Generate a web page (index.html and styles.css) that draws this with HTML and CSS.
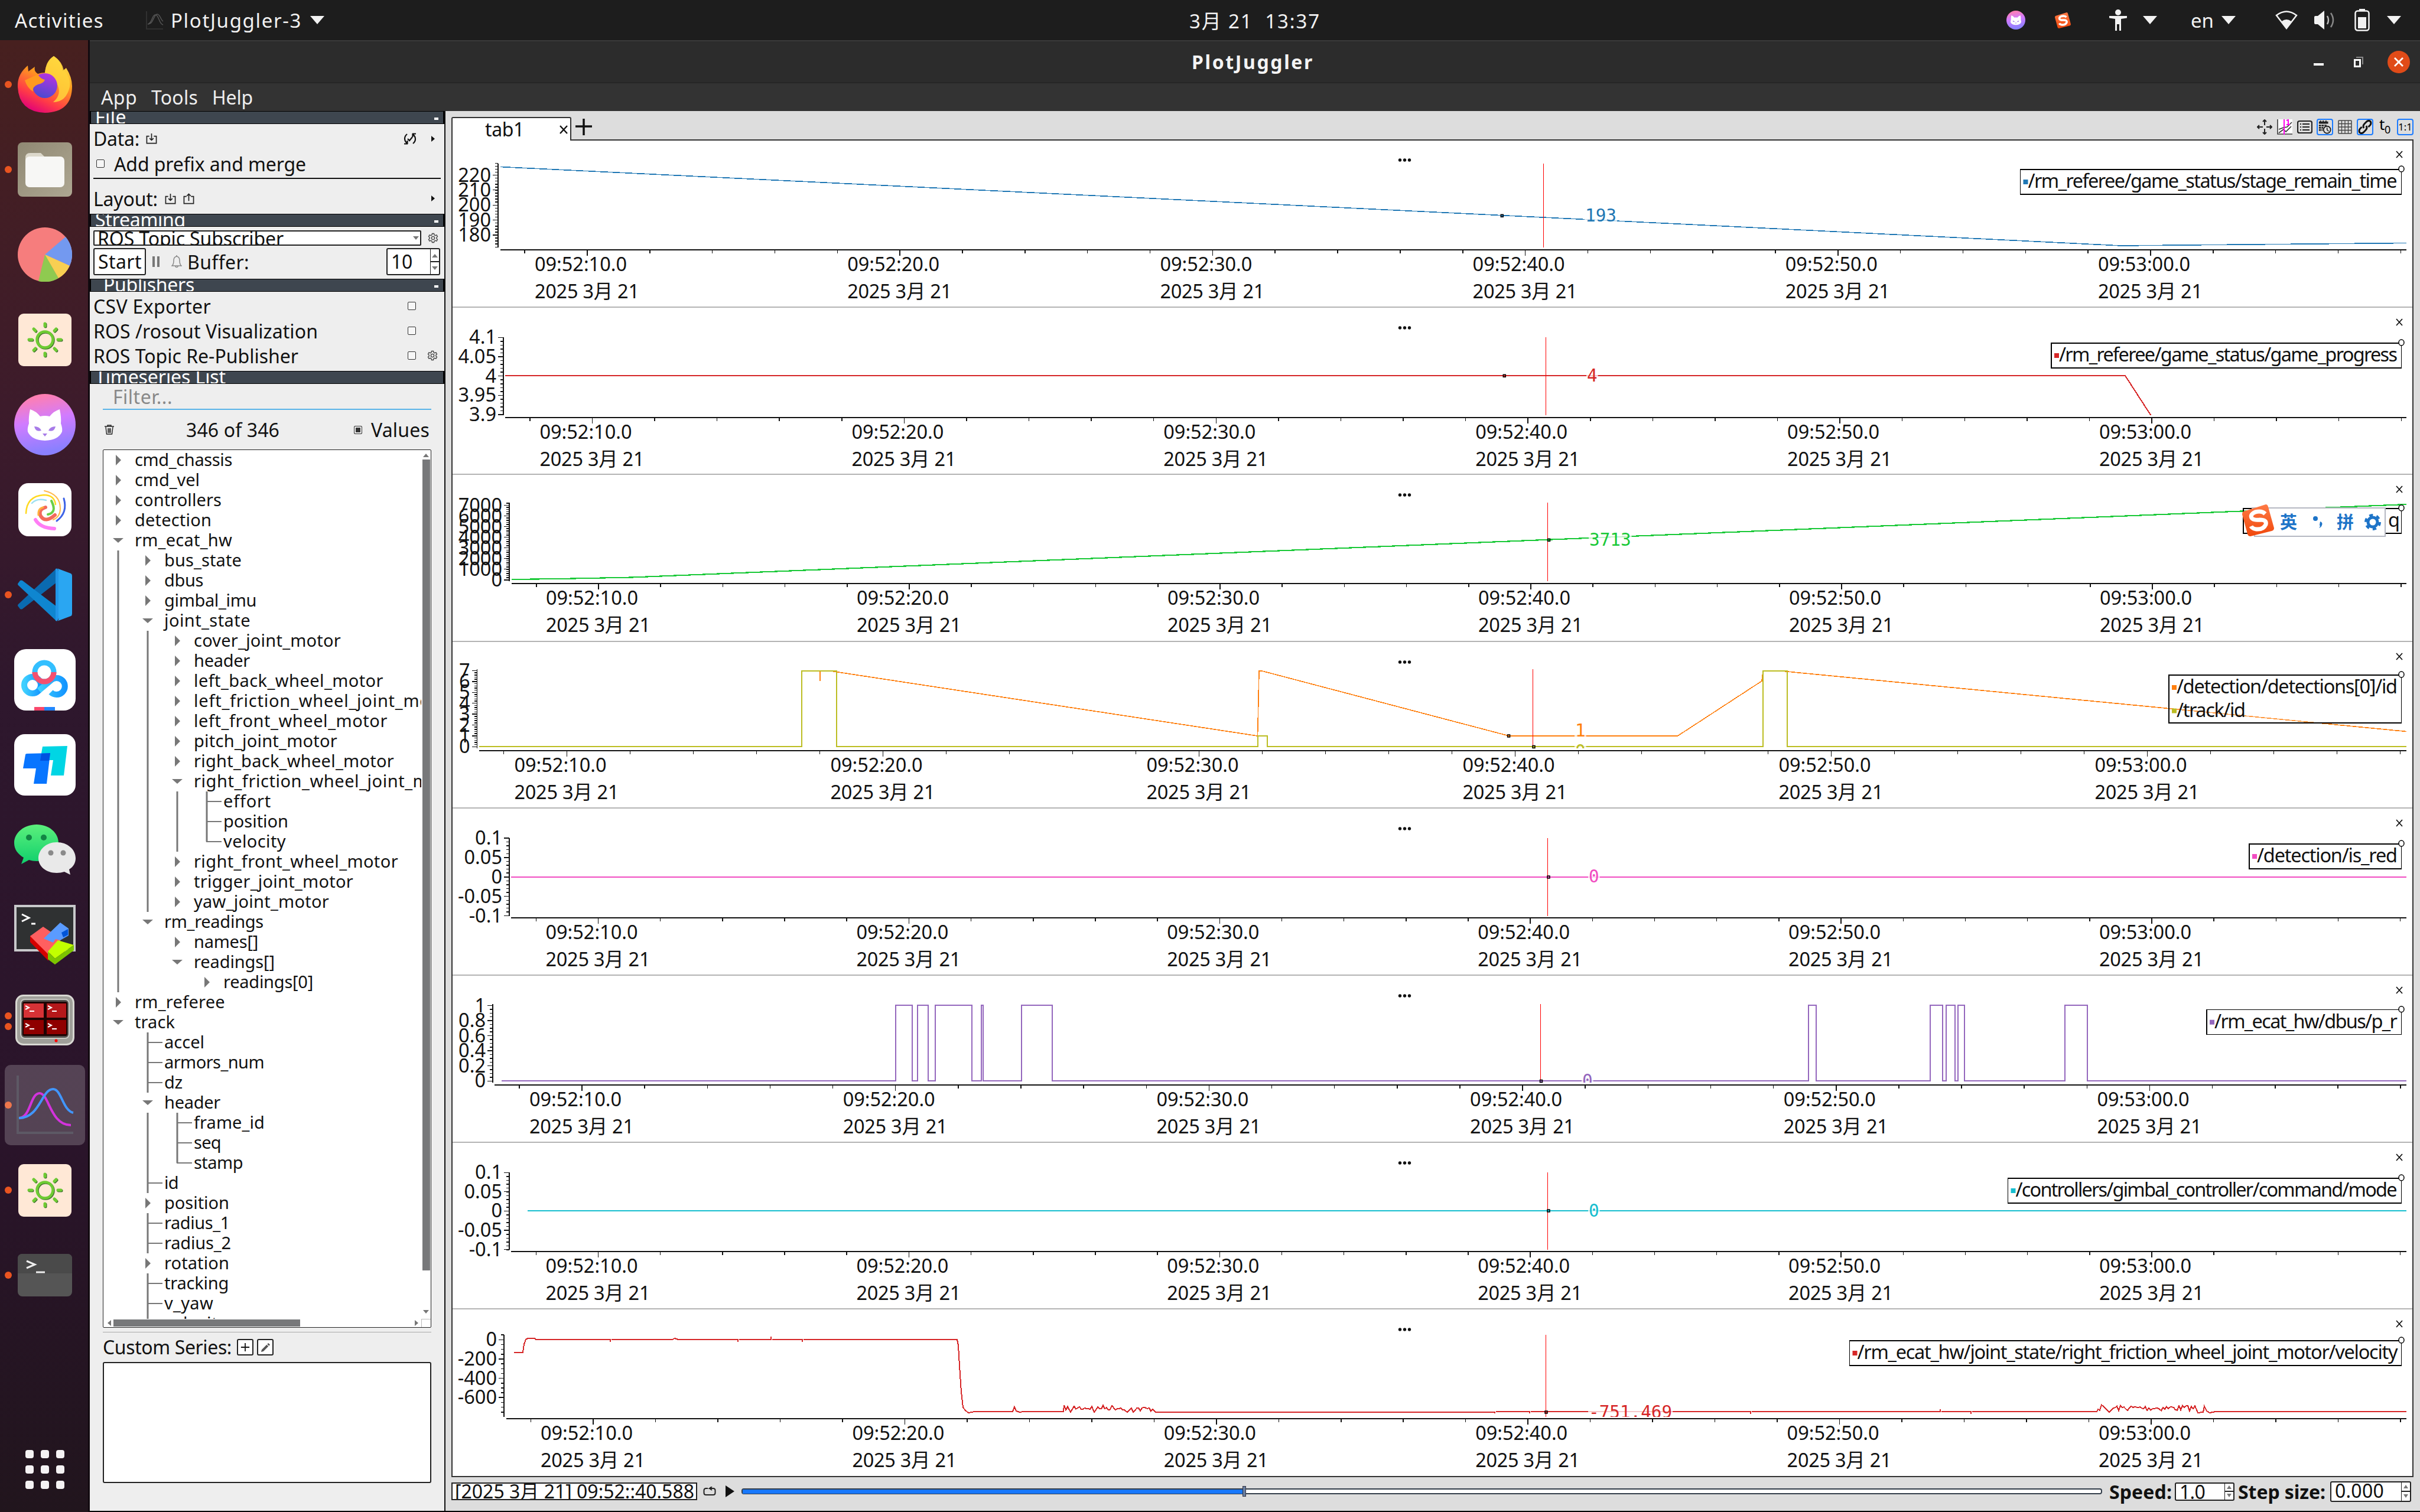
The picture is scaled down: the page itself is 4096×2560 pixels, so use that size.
FILE: index.html
```html
<!DOCTYPE html>
<html lang="en">
<head>
<meta charset="utf-8">
<title>PlotJuggler</title>
<link rel="stylesheet" href="styles.css">
</head>
<body>
<svg class="defs" width="0" height="0">
  <defs>
    <linearGradient id="catg" x1="0" y1="0" x2="0.2" y2="1"><stop offset="0.1" stop-color="#ff7fb0"/><stop offset="0.5" stop-color="#d17bff"/><stop offset="1" stop-color="#8a80ff"/></linearGradient>
    <linearGradient id="ffg" x1="0.8" y1="0" x2="0.3" y2="1"><stop offset="0" stop-color="#fff44f"/><stop offset="0.4" stop-color="#ff9a1f"/><stop offset="0.75" stop-color="#ff3b47"/><stop offset="1" stop-color="#e0007a"/></linearGradient>
    <linearGradient id="ffp" x1="0.7" y1="0" x2="0.4" y2="1"><stop offset="0" stop-color="#b833e1"/><stop offset="1" stop-color="#4a4ad0"/></linearGradient>
    <linearGradient id="fold" x1="0" y1="0" x2="1" y2="1"><stop offset="0" stop-color="#8f8873"/><stop offset="1" stop-color="#aea792"/></linearGradient>
    <linearGradient id="wxg" x1="0" y1="0" x2="0" y2="1"><stop offset="0" stop-color="#5cf07c"/><stop offset="1" stop-color="#0fcf6c"/></linearGradient>
    <linearGradient id="bdg" x1="0" y1="0" x2="1" y2="0"><stop offset="0" stop-color="#3fd0ff"/><stop offset="1" stop-color="#1496ff"/></linearGradient>
    <linearGradient id="sgg" x1="0" y1="0" x2="0" y2="1"><stop offset="0" stop-color="#ff7a45"/><stop offset="1" stop-color="#f0480c"/></linearGradient>
    <symbol id="cat" viewBox="0 0 104 104"><ellipse cx="52" cy="52" rx="52" ry="52" fill="url(#catg)"/><path d="M27 26q-3 14-2 24-3 8-2 14 6 14 29 15 23-1 29-15 1-6-2-14 1-10-2-24-10 3-17 12-8-2-16 0-7-9-17-12z" fill="#fff"/><path d="M34 55q9 0 12 7-10 3-12-7zM70 55q-9 0-12 7 10 3 12-7zM48 67h8l-4 5z" fill="#a77be8"/></symbol>
    <symbol id="sogou" viewBox="0 0 56 54"><path d="M2 12 40 0q3 0 4 4l10 36q0 4-4 5L14 54q-4 0-5-4L0 17q0-4 2-5z" fill="url(#sgg)"/><path d="M39 16q-6-6-17-3-9 4-6 10 3 4 14 3 12 0 10 8-4 9-16 8-7-1-9-5" fill="none" stroke="#fff" stroke-width="7"/></symbol>
    <symbol id="gear" viewBox="0 0 24 24"><path d="M10 2h4l.7 3 2.3 1.2 3-1 2 3.500-2.200 2.100v2.400l2.200 2.100-2 3.500-3-1-2.300 1.200-.7 3h-4l-.7-3L7 17.800l-3 1-2-3.500 2.200-2.100v-2.400L2 8.700l2-3.500 3 1L9.300 5z"/><circle cx="12" cy="12" r="3.500"/></symbol>
    <symbol id="tray-in" viewBox="0 0 20 20"><path d="M6 6H1.500v12.500h17V6H14M10 1v12M6.500 9.500 10 13l3.500-3.500" fill="none" stroke="#222" stroke-width="1.800"/></symbol>
    <symbol id="tray-out" viewBox="0 0 20 20"><path d="M6 6H1.500v12.500h17V6H14M10 14V1.500M6.500 5 10 1.500 13.500 5" fill="none" stroke="#222" stroke-width="1.800"/></symbol>
    <symbol id="sun" viewBox="0 0 92 92"><rect x="1" y="2" width="90" height="89" rx="9" fill="#ffe8d6"/><g fill="none" stroke="#3b6b2c" stroke-linecap="round" transform="translate(1 1)"><circle cx="46" cy="46" r="13.500" stroke-width="4.500"/><path stroke-width="5" d="M46 19v4M46 69v4M19 46h5M68 46h5M27 28l3 3M62 61l3 3M27 64l3-3M62 31l3-3"/></g><g fill="none" stroke="#6ecb33" stroke-linecap="round"><circle cx="46" cy="46" r="13.500" stroke-width="4.500"/><path stroke-width="5" d="M46 19v4M46 69v4M19 46h5M68 46h5M27 28l3 3M62 61l3 3M27 64l3-3M62 31l3-3"/></g></symbol>
  </defs>
</svg>

<header class="topbar">
  <span class="t activities" data-w="151">Activities</span>
  <svg class="app-ico" width="32" height="34" viewBox="0 0 32 34"><path d="M2 2v30h28" fill="none" stroke="#303030" stroke-width="2"/><path d="M4 24C12 22 11 8 17 8s6 16 13 17M4 24c10 0 10-17 16-17 5 0 6 10 10 12" fill="none" stroke="#555" stroke-width="1.500"/></svg>
  <span class="t appname" data-w="222">PlotJuggler-3</span>
  <i class="caret"></i>
  <span class="t clock" data-w="222">3月 21&nbsp; 13:37</span>
  <div class="tray">
    <svg class="i-cat" width="32" height="32"><use href="#cat"/></svg>
    <svg class="i-sg" width="28" height="27"><use href="#sogou"/></svg>
    <svg class="i-acc" width="30" height="36" viewBox="0 0 30 36"><circle cx="15" cy="5" r="5" fill="#f2f2f2"/><path d="M0 11h30v3.500l-10 1.500v20h-3V25h-4v11h-3V16L0 14.500z" fill="#f2f2f2"/></svg>
    <i class="caret c1"></i>
    <span class="t en" data-w="39">en</span>
    <i class="caret c2"></i>
    <svg class="i-wifi" width="38" height="32" viewBox="0 0 38 32"><path d="M2 8Q19-5 36 8L19 30z" fill="none" stroke="#f2f2f2" stroke-width="2.500"/><path d="M11 18q8-6 16 0l-8 13z" fill="#f2f2f2"/></svg>
    <svg class="i-vol" width="38" height="34" viewBox="0 0 38 34"><path d="M1 12q0-2 2-2h4l11-9v32L7 24H3q-2 0-2-2z" fill="#f2f2f2"/><path d="M23 10q4 7 0 14" stroke="#bbb" fill="none" stroke-width="2.500"/><path d="M29 5q8 12 0 24" stroke="#888" fill="none" stroke-width="2.500"/></svg>
    <svg class="i-bat" width="26" height="38" viewBox="0 0 26 38"><path d="M8 0h10v4H8z" fill="#f2f2f2"/><rect x="1.500" y="3.500" width="23" height="33" rx="4" fill="none" stroke="#f2f2f2" stroke-width="2.500"/><rect x="6" y="14" width="14" height="19" fill="#f2f2f2"/></svg>
    <i class="caret c3"></i>
  </div>
</header>

<div class="desk">
<nav class="dock">
  <div class="app run"><svg width="92" height="96" viewBox="0 0 92 96"><path d="M61 0q14 9 15 25l6-5q10 16 10 31 0 44-46 45Q2 94 0 52-1 31 17 16l1 10 11-8q-2 8 5 12 6-2 12-2 2-19 15-28z" fill="url(#ffg)"/><path d="M61 0q14 9 17 24 12 12 10 28-6 26-28 26 16-14 6-32-10-8-20-16 1-22 15-30z" fill="#ffd43c" opacity=".85"/><circle cx="46" cy="50" r="21" fill="url(#ffp)"/><path d="M12 41q15-7 22-10 5 8 12 9-2 6-12 8-10 4-8 12-10-6-14-19z" fill="#ff9a1f"/></svg></div>
  <div class="app run"><svg width="92" height="92" viewBox="0 0 92 92"><rect width="92" height="92" rx="8" fill="url(#fold)"/><path d="M13 26q0-8 8-8h18l8 8v20H13z" fill="#dcd8cb"/><rect x="13" y="24" width="66" height="52" rx="7" fill="#f7f7f5"/></svg></div>
  <div class="app"><svg width="92" height="92" viewBox="0 0 92 92"><circle cx="46" cy="46" r="46" fill="#f67d7d"/><path d="M46 46 81 16A46 46 0 0 1 88 65z" fill="#7399f0"/><path d="M46 46 88 65A46 46 0 0 1 69 86z" fill="#f8cf52"/><path d="M46 46 69 86A46 46 0 0 1 35 91z" fill="#8fca50"/></svg></div>
  <div class="app"><svg width="92" height="92"><use href="#sun"/></svg></div>
  <div class="app"><svg width="104" height="104"><use href="#cat"/></svg></div>
  <div class="app"><svg width="90" height="90" viewBox="0 0 90 90"><rect width="90" height="90" rx="17" fill="#fff"/><g fill="none" stroke-linecap="round"><path d="M13 51Q14 22 43 20q18 0 20 16" stroke="#ffd91f" stroke-width="2.500"/><path d="M44 13q27 6 27 30 0 14-12 19" stroke="#ffb94d" stroke-width="2"/><path d="M77 26q7 24-12 38" stroke="#3e63e6" stroke-width="3"/><path d="M23 34q8-9 24-5" stroke="#9fe0f0" stroke-width="2.500"/><path d="M56 30q10 20-6 23" stroke="#69cf48" stroke-width="4"/><path d="M62 54Q46 68 38 56q-5-11 8-15" stroke="#f36a5c" stroke-width="6"/><path d="M34 54q-1-11 8-13" stroke="#ffb03c" stroke-width="3"/><path d="M29 62q8 14 32 15" stroke="#ff7df5" stroke-width="6"/></g></svg></div>
  <div class="app run"><svg width="92" height="92" viewBox="0 0 92 92"><path d="M66 1v24L8 70q-2 1-4 0l-3-4q-2-2 0-4z" fill="#0a6ab0"/><path d="M66 91V66L8 22q-2-1-4 0l-3 4q-2 2 0 4z" fill="#0f86d0"/><path d="M66 1 90 10q2 1 2 4v64q0 3-2 4L66 91q4-1 3-6V7q0-5-3-6z" fill="#2aa6f2"/><path d="M64 2q4-1 5 4v80q-1 5-5 4z" fill="#2196e8"/></svg></div>
  <div class="app"><svg width="104" height="104" viewBox="0 0 104 104"><rect width="104" height="104" rx="20" fill="#fff"/><g fill="none" stroke="url(#bdg)" stroke-width="10"><circle cx="31" cy="61" r="14"/><path d="M42 70 62 53a14 14 0 1 1 0 20"/></g><circle cx="51" cy="39" r="16" stroke="#33bfff" fill="none" stroke-width="9"/><path d="M35 39a16 16 0 0 0 32 0" stroke="#f4506f" fill="none" stroke-width="9"/><path d="M34 98h17v6H34z" fill="#f9476b"/><path d="M51 98h18v6H51z" fill="#2287ff"/></svg></div>
  <div class="app"><svg width="104" height="104" viewBox="0 0 104 104"><rect width="104" height="104" rx="18" fill="#fff"/><path d="M48 21 90 20 84 70H62l4-26H44z" fill="#00d5e4"/><path d="M19 35q0-2 3-2l39-1-6 52H33l4-26H15z" fill="#0875ff"/><path d="M46 33l15-1-2 13H44z" fill="#0052e0"/></svg></div>
  <div class="app"><svg width="104" height="86" viewBox="0 0 104 86"><path d="M38 0c21 0 37 14 37 31S59 62 38 62q-7 0-13-2l-13 7 4-11C6 50 0 42 0 31 0 14 17 0 38 0z" fill="url(#wxg)"/><circle cx="25" cy="22" r="5" fill="#128544"/><circle cx="50" cy="22" r="5" fill="#128544"/><path d="M72 30c18 0 32 12 32 27 0 8-4 15-11 19l2 9-10-5q-6 2-13 2c-18 0-31-11-31-25s13-27 31-27z" fill="#e9e9e9"/><circle cx="62" cy="48" r="4.500" fill="#8a8a8a"/><circle cx="83" cy="48" r="4.500" fill="#8a8a8a"/></svg></div>
  <div class="app"><svg width="104" height="102" viewBox="0 0 104 102"><rect x="2" y="2" width="100" height="75" fill="#2f3132" stroke="#c8c9cb" stroke-width="4"/><path d="M13 16l12 6-12 6M29 32h7" fill="none" stroke="#fff" stroke-width="3"/><path d="M27 52 58 69v26L27 63z" fill="#d40000"/><path d="M27 53 49 37 80 58 58 84z" fill="#ff5f60"/><path d="M50 57 78 30l14 10v12l-14 8-8-2-4 6z" fill="#5a9bff"/><path d="M80 47l11-6v10l-8 4z" fill="#0054d8"/><path d="M57 79 74 60l27 8-32 23z" fill="#c2ff00"/><path d="M57 79 69 91v10L57 92zM69 91l32-23v9L69 101z" fill="#7cc400"/></svg></div>
  <div class="app run two"><svg width="100" height="86" viewBox="0 0 100 86"><rect x="1.500" y="1.500" width="97" height="83" rx="12" fill="#9f9f99" stroke="#d8d8d2" stroke-width="3"/><rect x="9" y="8" width="82" height="66" rx="7" fill="#54524e" stroke="#c9c9c4" stroke-width="2"/><rect x="12" y="12" width="76" height="58" rx="3" fill="#1f0303"/><path d="M14 15h34v24H14z" fill="#d63236"/><path d="M53 15h33v24H53z" fill="#b5181b"/><path d="M14 43h34v24H14zM53 43h33v24H53z" fill="#8f0000"/><path d="M17 19l6 3-6 3M24 28h8M55 19l6 3-6 3M62 28h8M17 49l6 3-6 3M24 58h8M55 49l6 3-6 3M62 58h8" stroke="#fff" fill="none" stroke-width="2"/><circle cx="69" cy="78" r="2.500" fill="#f00"/></svg></div>
  <div class="app run active"><svg width="100" height="100" viewBox="0 0 100 100"><path d="M4 0v97h94" fill="none" stroke="#35303f" stroke-width="4"/><path d="M6 72C26 72 25 30 41 30s18 54 53 54" fill="none" stroke="#c800d4" stroke-width="4"/><path d="M6 72c36 0 38-49 58-49 14 0 16 36 34 40" fill="none" stroke="#127cff" stroke-width="4"/></svg></div>
  <div class="app run"><svg width="92" height="92"><use href="#sun"/></svg></div>
  <div class="app run"><svg width="92" height="72" viewBox="0 0 92 72"><rect width="92" height="72" rx="8" fill="#555"/><path d="M0 33V8q0-8 8-8h76q8 0 8 8v25z" fill="#4a4a4a"/><path d="M15 12l14 6-14 6M31 31h15" fill="none" stroke="#eee" stroke-width="3"/></svg></div>
  <div class="grid9"><b></b><b></b><b></b><b></b><b></b><b></b><b></b><b></b><b></b></div>
</nav>

<main class="win">
  <div class="titlebar"><span class="t" data-w="207">PlotJuggler</span>
    <div class="wbtns"><i class="min"></i><svg width="16" height="18" viewBox="0 0 16 18"><path d="M4 1h11v12" fill="none" stroke="#888" stroke-width="2"/><rect x="1.500" y="5.500" width="9" height="11" fill="none" stroke="#fff" stroke-width="3"/></svg><b class="close"><svg width="18" height="18" viewBox="0 0 18 18"><path d="M2 2l14 14M16 2 2 16" stroke="#fff" stroke-width="2.800"/></svg></b></div>
  </div>
  <div class="menubar"><span class="t" data-w="61">App</span><span class="t" data-w="79">Tools</span><span class="t" data-w="69">Help</span></div>
  <div class="body">
    <aside class="side">
      <div class="hd"><span class="t" data-w="53">File</span><i></i></div>
      <section class="file">
        <div class="row r1"><span class="t" data-w="78">Data:</span><svg width="19" height="19"><use href="#tray-in"/></svg><svg class="push" width="22" height="22" viewBox="0 0 22 22"><path d="M6 3Q0 8 3 15l3 4M1 19.500h6M6.500 20v-6M16 19q6-5 3-12l-3-4M21 2.500h-6M15.500 2v6M7 11l3 3 5-6" fill="none" stroke="#111" stroke-width="2.200"/></svg><i class="tri"></i></div>
        <div class="row r2"><i class="chk"></i><span class="t" data-w="325">Add prefix and merge</span></div>
        <hr>
        <div class="row r3"><span class="t" data-w="109">Layout:</span><svg width="19" height="19"><use href="#tray-in"/></svg><svg width="19" height="21"><use href="#tray-out"/></svg><i class="tri push"></i></div>
      </section>
      <div class="hd"><span class="t" data-w="153">Streaming</span><i></i></div>
      <section class="stream">
        <div class="row s1"><div class="combo"><span class="t" data-w="315">ROS Topic Subscriber</span><i class="dn"></i></div><svg class="gear" width="18" height="18"><use href="#gear"/></svg></div>
        <div class="row s2"><div class="btn"><span class="t" data-w="74">Start</span></div><i class="pause"></i><svg width="18" height="22" viewBox="0 0 18 22"><path d="M1 18q3-2 3-9 0-6 5-7 5 1 5 7 0 7 3 9zM9 0v3M6.500 19q2.500 3 5 0" fill="none" stroke="#888" stroke-width="1.500"/></svg><span class="t" data-w="105">Buffer:</span><div class="spin push w91"><span class="t" data-w="36">10</span><em><i class="up"></i><i class="dn"></i></em></div></div>
      </section>
      <div class="hd pub"><span class="t" data-w="154">Publishers</span><i></i></div>
      <section class="pubs">
        <div class="row"><span class="t" data-w="199">CSV Exporter</span><i class="chk push"></i></div>
        <div class="row"><span class="t" data-w="380">ROS /rosout Visualization</span><i class="chk push"></i></div>
        <div class="row"><span class="t" data-w="347">ROS Topic Re-Publisher</span><i class="chk push"></i><svg class="gear g2" width="18" height="18"><use href="#gear"/></svg></div>
      </section>
      <div class="hd"><span class="t" data-w="221">Timeseries List</span></div>
      <section class="series">
        <div class="filter"><span class="t" data-w="101">Filter...</span></div>
        <div class="row cnt"><svg width="16" height="17" viewBox="0 0 16 17"><path d="M0 3h16M5 3V1h6v2M2 4l1.500 12h9L14 4M6 6v8M8 6v8M10 6v8" fill="none" stroke="#222" stroke-width="1.400"/></svg><span class="t n" data-w="158">346 of 346</span><i class="chk on"></i><span class="t" data-w="99">Values</span></div>
        <div class="tree"><div class="rows" id="rows"></div>
          <div class="vsb"><i class="up"></i><b></b><i class="dn"></i></div>
          <div class="hsb"><i class="lf"></i><b></b><i class="rt"></i></div><div class="corner"></div>
        </div>
        <div class="custom"><span class="t" data-w="218">Custom Series:</span><div class="sq"><svg width="16" height="16" viewBox="0 0 18 18"><path d="M9 1v16M1 9h16" stroke="#111" stroke-width="2"/></svg></div><div class="sq"><svg width="17" height="17" viewBox="0 0 18 18"><path d="M1 17l1-4 9-9 3 3-9 9zM12 3l2-2 3 3-2 2z" fill="#555"/></svg></div></div>
        <div class="cbox"></div>
      </section>
    </aside>

    <div class="work">
      <div class="tabs">
        <div class="tab"><span class="t" data-w="66">tab1</span><svg width="16" height="17" viewBox="0 0 16 17"><path d="M2 2l12 13M14 2 2 15" stroke="#111" stroke-width="2.400"/></svg></div>
        <svg class="plus" width="30" height="30" viewBox="0 0 30 30"><path d="M15 1v28M1 14h28" stroke="#111" stroke-width="3.500"/></svg>
        <div class="tools">
          <svg viewBox="0 0 26 26"><path d="M13 1v9M13 16v9M1 13h9M16 13h9M10 4l3-3 3 3M10 22l3 3 3-3M4 10l-3 3 3 3M22 10l3 3-3 3" fill="none" stroke="#222" stroke-width="2"/></svg>
          <svg viewBox="0 0 26 26"><path d="M0 0h26v26H0z" fill="#fff"/><path d="M1 0v25h25M3 17l8-3 6-1 8-8M3 23l8-6 4 4 9-9" fill="none" stroke="#333" stroke-width="1.600"/><path d="M12 0v26M16 2l3-1v8M16 9h6" fill="none" stroke="#f0e" stroke-width="2"/></svg>
          <svg viewBox="0 0 26 26"><rect x="1" y="3" width="24" height="20" rx="3" fill="none" stroke="#222" stroke-width="2.200"/><path d="M5 8h2M5 13h2M5 18h2M9 8h12M9 13h12M9 18h12" stroke="#222" stroke-width="2"/></svg>
          <svg class="on" viewBox="0 0 26 26"><path d="M2 3h17v4H2zM2 9h4v3H2zM7 9h4v3H7zM12 9h4v2h-4zM2 13h4v3H2zM7 13h3v3H7zM2 17h4v3H2zM7 17h2v3H7zM4 1h2v3H4zM9 1h2v3H9zM14 1h2v3h-2z" fill="#222"/><circle cx="17" cy="18" r="6.500" fill="#ddd" stroke="#111" stroke-width="1.800"/><path d="M17 14v4l3 3" stroke="#111" fill="none" stroke-width="1.500"/></svg>
          <svg viewBox="0 0 26 26"><rect x="2" y="2" width="22" height="22" rx="1" fill="none" stroke="#444" stroke-width="1.500"/><path d="M7.500 2v22M13 2v22M18.500 2v22M2 7.500h22M2 13h22M2 18.500h22" stroke="#444" stroke-width="1.300"/></svg>
          <svg class="on" viewBox="0 0 26 26"><path d="M11 15q-3-4 1-8l4-4q4-3 7 0 2 4-1 7l-3 3M15 11q3 4-1 8l-4 4q-4 3-7 0-2-4 1-7l3-3" fill="none" stroke="#111" stroke-width="3.200"/></svg>
          <svg viewBox="0 0 26 26"><text x="3" y="18" class="ic">t</text><text x="12" y="24" class="ics">0</text></svg>
          <svg class="on" viewBox="0 0 26 26"><text x="13" y="19" class="ics mid">1:1</text></svg>
        </div>
      </div>
      <div class="pane" id="pane"></div>
      <footer class="play">
        <div class="tbox"><span class="t" data-w="405">[2025 3月 21] 09:52::40.588</span></div>
        <svg width="22" height="16" viewBox="0 0 22 16"><path d="M8 3H5Q1.500 3 1.500 6.500v4Q1.500 14 5 14h12q3.500 0 3.500-3.500v-4Q20.500 3 17 3h-6l4-3M11 3l4 3" fill="none" stroke="#222" stroke-width="2"/></svg>
        <i class="go"></i>
        <div class="slider"><b></b><i></i></div>
        <span class="t bold sp" data-w="106">Speed:</span>
        <div class="spin w101"><span class="t" data-w="43">1.0</span><em><i class="up"></i><i class="dn"></i></em></div>
        <span class="t bold st" data-w="148">Step size:</span>
        <div class="spin w137"><span class="t" data-w="83">0.000</span><em><i class="up"></i><i class="dn"></i></em></div>
      </footer>
    </div>
  </div>
</main>
</div>
<script src="app.js"></script>
</body>
</html>
```
FILE: styles.css
```css
* { box-sizing: border-box; }
body { margin: 0; width: 4096px; height: 2560px; overflow: hidden; background: #2b1528; color: #111;
  font: 32px "Noto Sans", "Noto Sans CJK SC", sans-serif; }
i, em { font-style: normal; display: block; flex: none; }
svg { display: block; flex: none; }
.defs { position: absolute; }
.t { white-space: nowrap; flex: none; display: block; }
.bold { font-weight: 700; }
.push { margin-left: auto; }

.topbar { height: 68px; background: #1d1d1d; color: #f2f2f2; font-size: 33px; display: flex; align-items: center; padding-left: 25px; }
.activities { width: 151px; }
.app-ico { margin-left: 70px; }
.appname { margin-left: 11px; width: 222px; }
.caret { border: 12px solid transparent; border-top: 14px solid #f2f2f2; border-bottom: 0; }
.topbar > .caret { margin-left: 14px; }
.clock { margin-left: 1464px; width: 222px; }
.tray { margin-left: auto; display: flex; align-items: center; padding-right: 32px; }
.i-sg { margin-left: 50px; }
.i-acc { margin-left: 64px; }
.c1 { margin-left: 27px; }
.en { margin-left: 57px; width: 39px; }
.c2 { margin-left: 13px; }
.i-wifi { margin-left: 67px; }
.i-vol { margin-left: 27px; }
.i-bat { margin-left: 31px; }
.c3 { margin-left: 29px; }

.desk { display: flex; height: 2492px; }
.dock { width: 152px; border-right: 3px solid #120a10; display: flex; flex-direction: column; padding-top: 3px;
  background: linear-gradient(#47201f, #3d1b2b 25%, #2e172d 45%, #2a142a 75%, #21151d); }
.app { height: 144px; display: flex; align-items: center; justify-content: center; position: relative; width: 152px; flex: none; }
.app.run::before { content: ""; position: absolute; left: 8px; top: 66px; width: 12px; height: 12px; border-radius: 50%; background: #e95420; }
.app.two::before { top: 59px; box-shadow: 0 18px #e95420; }
.app.active::after { content: ""; position: absolute; left: 8px; top: 4px; width: 136px; height: 136px; border-radius: 10px; background: #fff; opacity: .2; }
.grid9 { margin: auto auto 39px 43px; display: grid; grid-template-columns: repeat(3, 14px); gap: 12px; width: 66px; }
.grid9 b { height: 14px; border-radius: 4px; background: #f4f2f3; }

.win { flex: 1; display: flex; flex-direction: column; }
.titlebar { height: 73px; background: #2c2c2c; border-top: 2px solid #3a3a3a; border-bottom: 2px solid #262626; color: #f4f4f4; font-weight: 700; display: grid; grid-template-columns: 1865px 207px 1fr; align-items: center; }
.titlebar > .t { grid-column: 2; }
.wbtns { display: flex; justify-content: flex-end; align-items: center; padding-right: 17px; }
.min { width: 17px; height: 4px; background: #fff; margin: 8px 51px 0 0; }
.close { width: 38px; height: 38px; border-radius: 50%; background: #e04b18; display: grid; place-items: center; margin-left: 41px; }
.menubar { height: 47px; background: #333; color: #eee; display: flex; align-items: center; gap: 24px; padding-left: 19px; line-height: 47px; }

.body { flex: 1; display: flex; background: #ddd; border-bottom: 2px solid #000; }
.side { width: 602px; background: #eee; border-right: 2px solid #111; flex: none; display: flex; flex-direction: column; }
.hd { height: 22px; background: #3e464f; border: 2px solid #000; border-width: 1px 2px; color: #fff; overflow: hidden; line-height: 18px; padding-left: 7px; display: flex; flex: none; }
.hd i { width: 7px; height: 4px; background: #fff; margin: 10px 8px 0 auto; }
.hd.pub { padding-left: 21px; }
.row { display: flex; align-items: center; }
.file { height: 152px; padding: 0 6px; }
.r1 { height: 46px; gap: 11px; padding: 3px 10px 0 0; }
.r1 .tri { margin-left: 14px; }
.r2 { height: 42px; gap: 16px; padding-left: 5px; }
.r3 { height: 59px; gap: 12px; padding: 7px 10px 0 0; }
.file hr { margin: 3px 0 0; border: 0; height: 2px; background: #111; }
.tri { border: 5px solid transparent; border-left: 6px solid #111; border-right: 0; }
.chk { width: 14px; height: 14px; border: 1.500px solid #333; border-radius: 2px; background: #f6f6f6; }
.chk.on { box-shadow: inset 0 0 0 2px #eee; background: #333; }
.stream { height: 88px; padding: 6px 7px 0 6px; }
.combo { width: 555px; height: 26px; border: 2px solid #222; border-radius: 2px; background: #fff; line-height: 21px; padding: 0 2px 0 5px; overflow: hidden; display: flex; justify-content: space-between; align-items: center; }
.s1 { gap: 11px; }
.gear { fill: none; stroke: #444; stroke-width: 1.800; }
.s2 { margin-top: 4px; height: 46px; }
.btn { width: 89px; height: 46px; border: 2px solid #222; border-radius: 3px; background: #fff; padding-left: 6px; line-height: 41px; }
.pause { width: 12px; height: 18px; border: 4.500px solid #777; border-width: 0 4.500px; margin: 0 20px 0 11px; }
.s2 .t { line-height: 41px; }
.s2 > .t { margin-left: 9px; }
.spin { height: 46px; border: 2px solid #222; border-radius: 3px; background: #fff; display: flex; justify-content: space-between; flex: none; }
.spin .t { margin-left: 6px; }
.spin em { width: 15px; border-left: 1px solid #222; display: flex; flex-direction: column; justify-content: space-around; align-items: center; background: linear-gradient(#222, #222) center / 100% 2px no-repeat; }
.w91 { width: 91px; } .w101 { width: 101px; } .w137 { width: 137px; }
.up, .dn { border: 5px solid transparent; }
.up { border-bottom: 6px solid #777; border-top: 0; }
.dn { border-top: 6px solid #777; border-bottom: 0; }
.pubs { height: 134px; padding: 3px 6px 0; }
.pubs .row { height: 42px; padding-right: 42px; }
.g2 { margin: 0 -37px 0 19px; }
.series { flex: 1; padding: 0 22px; display: flex; flex-direction: column; }
.filter { height: 44px; border-bottom: 2px solid #5ab4e8; color: #888; padding-left: 17px; line-height: 43px; }
.cnt { height: 67px; padding-left: 3px; }
.cnt .n { margin-left: 122px; width: 158px; }
.cnt .chk { margin: 0 15px 0 126px; }
.tree { height: 1487px; border: 1px solid #222; border-radius: 2px; background: #fff; overflow: hidden; display: grid; grid-template: 1471px 1fr / 538px 1fr; flex: none; }
.rows { overflow: hidden; font-size: 29px; }
.nd { height: 34px; line-height: 32px; display: flex; }
.nd .in { width: 50px; height: 34px; flex: none; }
.nd .t { margin-left: 3px; }
.vsb { display: flex; flex-direction: column; align-items: center; padding-top: 6px; }
.vsb b { width: 13px; height: 1373px; background: #77787a; margin: 4px 0 67px; flex: none; }
.hsb { display: flex; align-items: center; padding-left: 7px; }
.hsb b { width: 316px; height: 12px; background: #77787a; margin: 0 194px 0 4px; }
.corner { border: 1px solid #bbb; border-width: 1px 0 0 1px; }
.lf, .rt { border: 5px solid transparent; }
.lf { border-right: 6px solid #777; border-left: 0; }
.rt { border-left: 6px solid #777; border-right: 0; }
.custom { border-top: 1px solid #aaa; margin-top: 7px; height: 51px; display: flex; align-items: center; line-height: 50px; }
.custom .t { width: 227px; }
.sq { width: 28px; height: 28px; border: 2px solid #222; border-radius: 3px; background: #fff; margin-right: 6px; display: grid; place-items: center; }
.cbox { height: 205px; border: 2px solid #222; border-radius: 3px; background: #fff; }

.work { flex: 1; padding: 10px 11px 0 10px; display: flex; flex-direction: column; }
.tabs { height: 38px; display: flex; position: relative; z-index: 1; }
.tab { width: 203px; height: 40px; background: #fff; border: 2px solid #333; border-bottom: 0; border-radius: 3px 3px 0 0; line-height: 36px; padding-left: 55px; display: flex; align-items: center; justify-content: space-between; padding-right: 3px; }
.plus { margin: 2px 0 0 6px; }
.tools { margin-left: auto; display: flex; gap: 6px; padding-top: 3px; }
.tools svg { width: 28px; height: 28px; padding: 1px; }
.tools .on { border: 2px solid #1a7bff; border-radius: 4px; padding: 0; }
.ic { font-size: 26px; } .ics { font-size: 18px; } .mid { text-anchor: middle; }
.pane { background: #fff; border: 2px solid #333; height: 2265px; overflow: hidden; }
.pane svg { border-bottom: 2px solid #b4b4b4; }
.pane svg svg { border: 0; }
.pane svg:last-child { border-bottom: 0; }
.pane text { fill: #111; font-size: 32.500px; }
.pane text.val { font: 29.300px "DejaVu Sans Mono", monospace; fill: inherit; }
.pane text.bl { fill: #1e74c8; font-weight: 700; font-size: 29px; }
.axis { stroke: #111; stroke-width: 2; fill: none; shape-rendering: crispEdges; }
.tick { stroke: #111; stroke-width: 1.500; fill: none; shape-rendering: crispEdges; }
.curve { fill: none; shape-rendering: crispEdges; }

.play { flex: 1; display: flex; align-items: center; padding: 0 0 9px; }
.tbox { width: 416px; height: 30px; background: #fff; border: 2px solid #222; line-height: 26px; overflow: hidden; padding-left: 4px; }
.play > svg { margin-left: 10px; }
.go { border: 10px solid transparent; border-left: 15px solid #111; border-right: 0; margin-left: 16px; }
.slider { margin-left: 12px; width: 2303px; height: 10px; background: #fff; border: 2px solid #333e4a; border-radius: 4px; display: flex; align-items: center; }
.slider b { width: 846px; height: 7px; background: #1878ff; }
.slider i { width: 6px; height: 18px; background: #6a7fa0; border: 1px solid #334; }
.sp { margin-left: 12px; width: 106px; }
.st { margin: 0 8px 0 6px; width: 148px; }
.play .spin { height: 31px; margin-left: 5px; }
.play .st + .spin { height: 35px; margin-left: 0; }
.play .spin .t { line-height: 27px; }
.play .up, .play .dn { border-width: 4px; }
.play .up { border-top: 0; border-bottom-width: 6px; } .play .dn { border-bottom: 0; border-top-width: 6px; }
```
FILE: app.js
```js
// Tree nodes: [depth, kind (c = closed, o = open, l = leaf, e = last leaf), label, width, depths with a guide line]
const T = [
  [0,'c','cmd_chassis',165],[0,'c','cmd_vel',110],[0,'c','controllers',147],[0,'c','detection',130],[0,'o','rm_ecat_hw',165],
  [1,'c','bus_state',131,'0'],[1,'c','dbus',66,'0'],[1,'c','gimbal_imu',156,'0'],[1,'o','joint_state',146,'0'],
  [2,'c','cover_joint_motor',249,'01'],[2,'c','header',95,'01'],[2,'c','left_back_wheel_motor',321,'01'],
  [2,'c','left_friction_wheel_joint_motor',443,'01'],[2,'c','left_front_wheel_motor',328,'01'],[2,'c','pitch_joint_motor',243,'01'],
  [2,'c','right_back_wheel_motor',339,'01'],[2,'o','right_friction_wheel_joint_motor',458,'01'],
  [3,'l','effort',81,'012'],[3,'l','position',110,'012'],[3,'e','velocity',106,'012'],
  [2,'c','right_front_wheel_motor',346,'01'],[2,'c','trigger_joint_motor',270,'01'],[2,'c','yaw_joint_motor',229,'01'],
  [1,'o','rm_readings',168,'0'],[2,'c','names[]',109,'0'],[2,'o','readings[]',137,'0'],[3,'c','readings[0]',152,'0'],
  [0,'c','rm_referee',153],[0,'o','track',68],
  [1,'l','accel',68],[1,'l','armors_num',169],[1,'l','dz',31],[1,'o','header',95],
  [2,'l','frame_id',120,'1'],[2,'l','seq',46,'1'],[2,'e','stamp',83,'1'],
  [1,'l','id',24],[1,'c','position',110],[1,'l','radius_1',111],[1,'l','radius_2',113],[1,'c','rotation',110],
  [1,'l','tracking',109],[1,'l','v_yaw',83],[1,'l','velocity',106]
];
const shapes = {
  c: '<path d="M21 8v18l9-9z" fill="#777"/>',
  o: '<path d="M16 13h18l-9 8z" fill="#777"/>',
  l: '<path d="M25 0v34" stroke="#777" stroke-width="3"/><path d="M25 17h25" stroke="#777" stroke-width="2"/>',
  e: '<path d="M25 0v17" stroke="#777" stroke-width="3"/><path d="M24 17h26" stroke="#777" stroke-width="2"/>',
  g: '<path d="M25 0v34" stroke="#777" stroke-width="3"/>', n: ''
};
document.getElementById('rows').innerHTML = T.map(([d, k, s, w, g = '']) => {
  let h = '';
  for (let i = 0; i <= d; i++)
    h += `<svg class="in" viewBox="0 0 50 34">${i === d ? shapes[k] : shapes[g.includes(i) ? 'g' : 'n']}</svg>`;
  return `<div class="nd">${h}<span class="t" data-w="${w}">${s}</span></div>`;
}).join('');

const R = 4073, hz = (x, a, b) => `M${x} ${a}H${b}`;
const pulse = (x0, y0, y1, ps) => `M${x0} ${y0}` + ps.map(([a, b]) => `H${a}V${y1}H${b}V${y0}`).join('') + `H${R}`;
let seed = 7;
const rnd = () => (seed = (seed * 16807) % 2147483647) / 2147483647;
const noise = (a, b, lo, hi) => { let s = ''; for (let x = a; x < b; x += 3) s += `L${x} ${(lo + rnd() * (hi - lo)).toFixed(1)}`; return s; };
const speed = 'M870 2290H885L887 2276 890 2268 893 2266H905L907 2268H1033V2272M1036 2267V2268H1138L1142 2266 1148 2268H1249V2272M1251 2268H1305V2263M1307 2268H1358V2272M1360 2268H1620L1622 2278 1624 2312 1627 2357 1630 2383 1634 2388 1639 2392 1650 2390H1714L1717 2382 1720 2389 1726 2391 1732 2390H1800' +
  noise(1801, 1808, 2379, 2388) + 'L1812 2391' + noise(1818, 1850, 2379, 2388) + 'L1852 2391' + noise(1858, 1905, 2379, 2388) + 'L1908 2391L1915 2384L1918 2391' + noise(1924, 1952, 2381, 2390) + 'L1956 2391' +
  'H2530V2393M2532 2390H2589V2393M2591 2390H2963V2394M2965 2390H3284V2386M3286 2390H3336V2394M3338 2390H3549' + noise(3551, 3566, 2378, 2389) + 'L3570 2391L3575 2386' + noise(3577, 3716, 2379, 2389) + 'L3720 2392 3729 2391 3731 2381 3735 2389 3740 2392 3750 2390H' + R;

const P = [
  { top:238, h:283, ax:843, x0:847, c0:277, c1:419, xa:423, t0:994, sp:529.200, m:5.070, y:[['220',296.600],['210',321.700],['200',347.300],['190',372.500],['180',398]],
    curves:[['#1f77b4','M847 282.500L2900 382 3590 416 3640 415.500 4073 411.500',1.600]], cur:2612.500, pts:[[2542.300,365.300,'#1f77b4']], vals:[['193',2683,374.700,'#1f77b4',365]],
    lx:3419.500, leg:[['/rm_referee/game_status/stage_remain_time','#1f77b4',625]] },
  { top:521, h:283, ax:852, x0:855, c0:571, c1:703, xa:706.500, t0:1002.500, sp:527.900, m:6.530, y:[['4.1',571.400],['4.05',604],['4',636.600],['3.95',669.300],['3.9',702]],
    curves:[['#d62728','M855 636H3597L3641 704',2]], cur:2616.500, pts:[[2546.300,636.300,'#d62728']], vals:[['4',2686,645.700,'#d62728',636]],
    lx:3472, leg:[['/rm_referee/game_status/game_progress','#d62728',573]] },
  { top:804, h:283, ax:862, x0:866, c0:851, c1:984, xa:988, t0:1013, sp:526, m:3.610, y:[['7000',855.500],['6000',873.500],['5000',891.600],['4000',909.600],['3000',927.700],['2000',945.700],['1000',963.700],['0',981.800]],
    curves:[['#1ac938','M866 981L945 980 1070 977.500 4073 854',2.200]], cur:2619.500, pts:[[2621.500,914.300,'#1ac938']], vals:[['3713',2690,924,'#1ac938',911]],
    lx:3797, leg:[['q','#1ac938',15]], ime:1 },
  { top:1087, h:282, ax:807.500, x0:811, c0:1133, c1:1267, xa:1271.400, t0:959.500, sp:535, m:3.680, y:[['7',1135.500],['6',1153.900],['5',1172.300],['4',1190.700],['3',1209.100],['2',1227.500],['1',1245.900],['0',1264.300]],
    curves:[['#ff7f0e','M1356.500 1135.500H1388V1153V1135.500H1402L2128.500 1246 2129 1230 2131 1136H2136L2553 1245.700H2840L2982 1153 2984 1136H3014L4073 1238.500',1.600],
      ['#bcbd22','M811 1264H1356.500V1135.500H1415.500V1264H2128.500V1246H2144.500V1264H2984V1135.500H3025V1264H4073',2]],
    cur:2594.700, pts:[[2553.600,1246,'#ff7f0e'],[2596,1264.500,'#bcbd22']], vals:[['1',2666,1246.500,'#ff7f0e',1240],['0',2666,1282,'#bcbd22',1264]],
    lx:3671, leg:[['/detection/detections[0]/id','#ff7f0e',374],['/track/id','#bcbd22',117]] },
  { top:1369, h:283, ax:862, x0:865, c0:1419, c1:1550.600, xa:1554.400, t0:1012.500, sp:525.900, m:6.580, y:[['0.1',1419],['0.05',1451.900],['0',1484.800],['-0.05',1517.700],['-0.1',1550.600]],
    curves:[['#f14cc1',hz(865,1484.800,R),2]], cur:2619.500, pts:[[2621,1485,'#f14cc1']], vals:[['0',2689,1494,'#f14cc1',1484]],
    lx:3807, leg:[['/detection/is_red','#f14cc1',238]] },
  { top:1652, h:283, ax:834, x0:837, c0:1699.700, c1:1833, xa:1837, t0:985, sp:530.700, m:6.390, y:[['1',1702.500],['0.8',1728.100],['0.6',1753.600],['0.4',1779.200],['0.2',1804.700],['0',1830.300]],
    curves:[['#9467bd',pulse(849,1830,1702,[[1516,1543.500],[1553,1571],[1582.500,1644.500],[1660.500,1664],[1729,1781],[3061,3074],[3266.500,3288],[3293.500,3308.500],[3314,3325],[3494.500,3533]]),2]],
    cur:2607, pts:[[2608.500,1830.500,'#9467bd']], vals:[['0',2678,1840,'#9467bd',1830]], lx:3735, leg:[['/rm_ecat_hw/dbus/p_r','#9467bd',310]] },
  { top:1935, h:282, ax:862, x0:865, c0:1985, c1:2116, xa:2119.400, t0:1012.500, sp:525.900, m:6.530, y:[['0.1',1985.300],['0.05',2017.700],['0',2050.400],['-0.05',2083],['-0.1',2115.700]],
    curves:[['#17becf',hz(893,2050,R),2]], cur:2619.500, pts:[[2621,2050,'#17becf']], vals:[['0',2689,2059.500,'#17becf',2050]],
    lx:3398.500, leg:[['/controllers/gimbal_controller/command/mode','#17becf',646]] },
  { top:2217, h:283, ax:853, x0:857, c0:2260, c1:2399, xa:2402.300, t0:1004, sp:527.400, m:8.170, y:[['0',2268.300],['-200',2300.900],['-400',2333.500],['-600',2366.200]],
    curves:[['#d62728',speed,2]], cur:2616.500, pts:[[2617,2391,'#d62728']], vals:[['-751.469',2689,2400.500,'#d62728',2390]],
    lx:3130.500, leg:[['/rm_ecat_hw/joint_state/right_friction_wheel_joint_motor/velocity','#d62728',915]] }
];
const TL = ['09:52:10.0', '09:52:20.0', '09:52:30.0', '09:52:40.0', '09:52:50.0', '09:53:00.0'];
const txt = (x, y, s, w, extra = '') => `<text x="${x}" y="${y}" textLength="${w}" ${extra}>${s}</text>`;

document.getElementById('pane').innerHTML = P.map((p, n) => {
  let s = `<clipPath id="k${n}"><rect x="${p.x0}" y="${p.c0}" width="${R - p.x0}" height="${p.c1 - p.c0}"/></clipPath>`;
  let mn = '', mj = '';
  for (let y = p.y[0][1]; y >= p.c0 - 1; y -= p.m) mn += `M${p.ax - 5} ${y}H${p.ax}`;
  for (let y = p.y[0][1]; y <= p.c1; y += p.m) mn += `M${p.ax - 5} ${y}H${p.ax}`;
  for (const [, y] of p.y) mj += `M${p.ax - 9} ${y}H${p.ax}`;
  for (let x = p.t0 - p.sp / 5; x <= R; x += p.sp / 5) mn += `M${x} ${p.xa}v6`;
  TL.forEach((l, i) => {
    const x = p.t0 + i * p.sp;
    mj += `M${x} ${p.xa}v10`;
    s += txt(x - 89, p.xa + 36, l, 156) + txt(x - 89, p.xa + 82, '2025 3月 21', 177);
  });
  s += `<path class="tick" d="${mn}${mj}"/><path class="axis" d="M${p.x0} ${p.xa}H${R}"/><path class="tick" d="M${p.ax} ${p.c0}V${p.c1}"/>`;
  for (const [l, y] of p.y) s += `<text x="${p.ax - 12}" y="${y + 11}" text-anchor="end">${l}</text>`;
  s += `<g clip-path="url(#k${n})">`;
  for (const [c, d, w] of p.curves) s += `<path class="curve" d="${d}" stroke="${c}" stroke-width="${w}"/>`;
  s += '</g>';
  s += `<path d="M${p.cur} ${p.c0}V${p.c1}" stroke="#f00" stroke-width="1" shape-rendering="crispEdges"/>`;
  for (const [x, y, c] of p.pts) s += `<rect x="${x - 2}" y="${y - 2}" width="4" height="4" fill="${c}" stroke="#000" stroke-width="1.500"/>`;
  s += `<g clip-path="url(#k${n})">`;
  for (const [l, x, y, c] of p.vals) s += `<rect x="${x - 1}" y="${y - 25}" width="${l.length * 17.65 + 2}" height="32" fill="#fff" opacity=".75"/><text class="val" x="${x}" y="${y}" style="fill:${c}">${l}</text>`;
  s += '</g>';
  const ly = p.c0 + 10;
  s += `<rect x="${p.lx}" y="${ly}" width="${4064.5 - p.lx}" height="${p.leg.length > 1 ? 81 : 42}" fill="#fff" fill-opacity=".2" stroke="#000" stroke-width="1.500" shape-rendering="crispEdges"/>`;
  p.leg.forEach(([l, c, w], i) => {
    const tx = p.ime ? 4042 : p.lx + 13;
    if (!p.ime) s += `<rect x="${p.lx + 5}" y="${ly + 17 + i * 39.5}" width="8" height="8" fill="${c}"/>`;
    s += txt(tx, ly + 31 + i * 39.5, l, w);
  });
  s += `<ellipse cx="4064.500" cy="${ly - 1}" rx="4.500" ry="5" fill="#fff" stroke="#000" stroke-width="1.500"/>`;
  if (p.ime) s += `<path d="M3812 860H4037V908H3816z" fill="#fff" stroke="#b5b8c2" stroke-width="2"/><svg x="3795" y="854" width="56" height="54"><use href="#sogou"/></svg>` +
    `<text class="bl" x="3859" y="895">英</text><circle cx="3919" cy="878" r="4" fill="#1e74c8"/><path d="M3927 883a4 4 0 0 1 3 6q-1 4-5 5 3-3 1-5z" fill="#1e74c8"/><text class="bl" x="3955" y="895">拼</text>` +
    `<g transform="translate(4016 884)"><circle r="8" fill="none" stroke="#1e74c8" stroke-width="5"/><circle r="12" fill="none" stroke="#1e74c8" stroke-width="4" stroke-dasharray="6.280 6.280"/></g>`;
  const t = p.top + (n ? 0 : -1);
  s += `<g fill="#111"><circle cx="2369.500" cy="${t + 34}" r="2.700"/><circle cx="2377.500" cy="${t + 34}" r="2.700"/><circle cx="2385.500" cy="${t + 34}" r="2.700"/></g>`;
  s += `<path d="M4056 ${t + 19}l10 11m0-11l-10 11" stroke="#111" stroke-width="1.800"/>`;
  return `<svg width="3317" height="${p.h}" viewBox="766 ${p.top} 3317 ${p.h - (n < 7 ? 2 : 0)}">${s}</svg>`;
}).join('');

// Spread letters so that each label takes its set width.
document.querySelectorAll('.t[data-w]').forEach(e => {
  const r = document.createRange(); r.selectNodeContents(e);
  const w = r.getBoundingClientRect().width;
  e.style.letterSpacing = ((e.dataset.w - w) / e.textContent.length).toFixed(3) + 'px';
});
```
